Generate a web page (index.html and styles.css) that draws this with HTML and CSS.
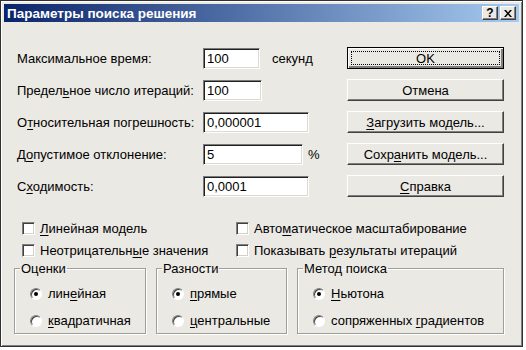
FILE: index.html
```html
<!DOCTYPE html>
<html lang="ru">
<head>
  <meta charset="UTF-8">
  <title>Параметры поиска решения</title>
  <link rel="stylesheet" href="styles.css">
</head>
<body>
  <div class="dialog">
    <div class="titlebar">
      <span class="title">Параметры поиска решения</span>
      <div class="caption-buttons">
        <span class="cap-btn cap-help">?</span>
        <span class="cap-btn cap-close">
          <svg width="8" height="7" viewBox="0 0 8 7"><path d="M0 0h2l2 2.5L6 0h2L5 3.5 8 7H6L4 4.5 2 7H0l3-3.5z" fill="#000"/></svg>
        </span>
      </div>
    </div>

    <div class="top">
      <!-- numeric settings -->
      <div class="fields">
        <label class="field-label">Максимальное время:</label>
        <div class="field"><span class="input w57">100</span><span class="suffix">секунд</span></div>

        <label class="field-label">Предел<u>ь</u>ное число итераций:</label>
        <div class="field"><span class="input w59">100</span></div>

        <label class="field-label">О<u>т</u>носительная погрешность:</label>
        <div class="field"><span class="input w106">0,000001</span></div>

        <label class="field-label">Д<u>о</u>пустимое отклонение:</label>
        <div class="field"><span class="input w100">5</span><span class="suffix pct">%</span></div>

        <label class="field-label">С<u>х</u>одимость:</label>
        <div class="field"><span class="input w106">0,0001</span></div>
      </div>

      <!-- command buttons -->
      <div class="buttons">
        <div class="btn btn-default"><span class="focus">OK</span></div>
        <div class="btn">Отмена</div>
        <div class="btn"><span><u>З</u>агрузить модель...</span></div>
        <div class="btn"><span>Сохр<u>а</u>нить модель...</span></div>
        <div class="btn"><span><u>С</u>правка</span></div>
      </div>
    </div>

    <div class="checks">
      <div class="check"><span class="box"></span><span><u>Л</u>инейная модель</span></div>
      <div class="check"><span class="box"></span><span>Авто<u>м</u>атическое масштабирование</span></div>
      <div class="check"><span class="box"></span><span>Неотрицательн<u>ы</u>е значения</span></div>
      <div class="check"><span class="box"></span><span>Показывать <u>р</u>езультаты итераций</span></div>
    </div>

    <div class="groups">
      <fieldset class="group g-est">
        <legend>Оценки</legend>
        <div class="radio"><span class="dot on"></span><span>лин<u>е</u>йная</span></div>
        <div class="radio"><span class="dot"></span><span><u>к</u>вадратичная</span></div>
      </fieldset>
      <fieldset class="group g-diff">
        <legend>Разности</legend>
        <div class="radio"><span class="dot on"></span><span><u>п</u>рямые</span></div>
        <div class="radio"><span class="dot"></span><span><u>ц</u>ентральные</span></div>
      </fieldset>
      <fieldset class="group g-method">
        <legend>Метод поиска</legend>
        <div class="radio"><span class="dot on"></span><span><u>Н</u>ьютона</span></div>
        <div class="radio"><span class="dot"></span><span>сопряженных <u>г</u>радиентов</span></div>
      </fieldset>
    </div>
  </div>
</body>
</html>
```

FILE: styles.css
```css
* {
  box-sizing: border-box;
}
body {
  margin: 0;
  background: #ffffff;
  font-family: "Liberation Sans", Arial, sans-serif;
  font-size: 13px;
  color: #000;
}
u {
  text-decoration: underline;
  text-underline-offset: 2px;
}
.dialog {
  width: 523px;
  height: 347px;
  padding: 3px;
  background: #ebe9e4;
  border: 1px solid #303030;
  box-shadow: inset 1px 1px 0 #ffffff, inset -1px -1px 0 #808080;
}
.titlebar {
  height: 18px;
  display: flex;
  align-items: center;
  justify-content: space-between;
  padding: 0 3px 0 3px;
  background: linear-gradient(to right, #0a246a, #a6caf0);
}
.title {
  color: #fff;
  font-weight: bold;
  font-size: 13.5px;
}
.caption-buttons {
  display: flex;
  gap: 2px;
}
.cap-btn {
  width: 16px;
  height: 14px;
  display: flex;
  align-items: center;
  justify-content: center;
  background: #ebe9e4;
  border: 1px solid;
  border-color: #fff #404040 #404040 #fff;
  box-shadow: inset -1px -1px 0 #808080;
  font-weight: bold;
  font-size: 12px;
  line-height: 1;
}
.top {
  display: flex;
  padding: 25px 0 0 13px;
}
.fields {
  width: 330px;
  display: grid;
  grid-template-columns: 186px auto;
  grid-auto-rows: 22px;
  row-gap: 10px;
  align-items: center;
}
.field {
  display: flex;
  align-items: center;
}
.input {
  height: 21px;
  display: flex;
  align-items: center;
  padding-left: 3px;
  background: #fff;
  border: 1px solid;
  border-color: #7a7a7a #fff #fff #7a7a7a;
  box-shadow: inset 1px 1px 0 #202020, inset -1px -1px 0 #dcdad4;
}
.w57 { width: 57px; }
.w59 { width: 59px; }
.w100 { width: 100px; }
.w106 { width: 106px; }
.suffix {
  margin-left: 12px;
}
.suffix.pct {
  margin-left: 5px;
}
.buttons {
  width: 157px;
  display: flex;
  flex-direction: column;
  gap: 10px;
}
.btn {
  height: 22px;
  display: flex;
  align-items: center;
  justify-content: center;
  border: 1px solid;
  border-color: #fff #404040 #404040 #fff;
  box-shadow: inset -1px -1px 0 #808080;
}
.btn-default {
  border: 1px solid #000;
  box-shadow: inset 1px 1px 0 #fff, inset -2px -2px 0 #808080;
  padding: 3px;
}
.btn-default .focus {
  width: 100%;
  height: 100%;
  display: flex;
  align-items: center;
  justify-content: center;
  border: 1px dotted #000;
}
.checks {
  display: grid;
  grid-template-columns: 214px auto;
  grid-auto-rows: 22px;
  align-items: center;
  padding: 20px 0 0 18px;
}
.check {
  display: flex;
  align-items: center;
}
.box {
  width: 13px;
  height: 13px;
  margin-right: 5px;
  background: #fff;
  border: 1px solid;
  border-color: #808080 #fff #fff #808080;
  box-shadow: inset 1px 1px 0 #404040, inset -1px -1px 0 #d4d0c8;
}
.groups {
  display: flex;
  gap: 10px;
  padding: 0 0 0 10px;
}
.group {
  margin: 0;
  height: 73px;
  padding: 4px 0 0 15px;
  border: 1px solid #a09e98;
  box-shadow: 1px 1px 0 #fff, inset 1px 1px 0 #fff;
}
.group legend {
  padding: 0 1px;
  margin-left: -10px;
}
.g-est { width: 132px; }
.g-diff { width: 131px; }
.g-method { width: 207px; }
.radio {
  height: 27px;
  display: flex;
  align-items: center;
}
.dot {
  position: relative;
  width: 12px;
  height: 12px;
  margin-right: 6px;
  border-radius: 50%;
  background: #fff;
  border: 1px solid;
  border-color: #808080 #fff #fff #808080;
  box-shadow: inset 1px 1px 0 #404040;
}
.dot.on::after {
  content: "";
  position: absolute;
  left: 3px;
  top: 3px;
  width: 4px;
  height: 4px;
  border-radius: 50%;
  background: #000;
}
```
